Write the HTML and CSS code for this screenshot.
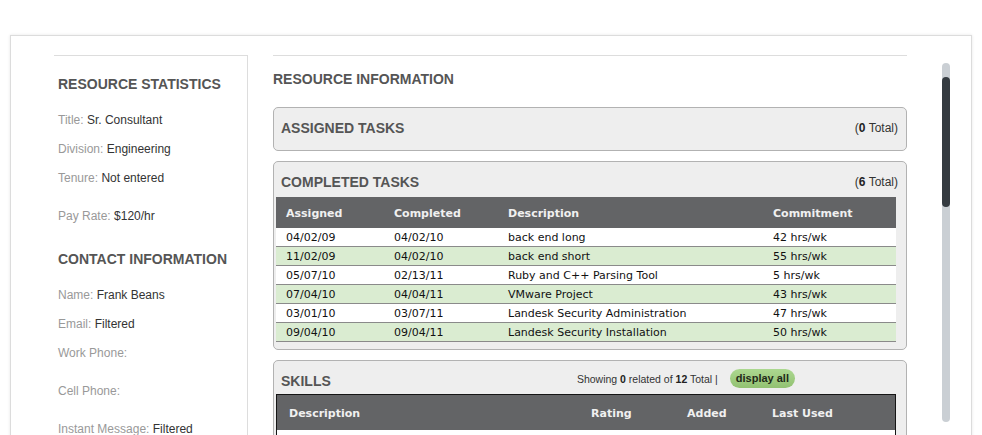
FILE: index.html
```html
<!DOCTYPE html>
<html>
<head>
<meta charset="utf-8">
<title>Resource</title>
<link rel="stylesheet" href="styles.css">
</head>
<body>
<div class="page">
  <div class="card">
    <aside class="side">
      <h3 class="sec-title first">RESOURCE STATISTICS</h3>
      <div class="row"><span class="lbl">Title:</span> <span class="val">Sr. Consultant</span></div>
      <div class="row"><span class="lbl">Division:</span> <span class="val">Engineering</span></div>
      <div class="row tall"><span class="lbl">Tenure:</span> <span class="val">Not entered</span></div>
      <div class="row"><span class="lbl">Pay Rate:</span> <span class="val">$120/hr</span></div>
      <h3 class="sec-title">CONTACT INFORMATION</h3>
      <div class="row"><span class="lbl">Name:</span> <span class="val">Frank Beans</span></div>
      <div class="row"><span class="lbl">Email:</span> <span class="val">Filtered</span></div>
      <div class="row tall"><span class="lbl">Work Phone:</span></div>
      <div class="row tall"><span class="lbl">Cell Phone:</span></div>
      <div class="row"><span class="lbl">Instant Message:</span> <span class="val">Filtered</span></div>
    </aside>

    <main class="main">
      <h2 class="main-title">RESOURCE INFORMATION</h2>

      <section class="panel assigned">
        <div class="panel-head">
          <h4 class="panel-title">ASSIGNED TASKS</h4>
          <span class="total">(<b>0</b> Total)</span>
        </div>
      </section>

      <section class="panel completed">
        <div class="panel-head">
          <h4 class="panel-title">COMPLETED TASKS</h4>
          <span class="total">(<b>6</b> Total)</span>
        </div>
        <table class="grid tasks">
          <colgroup>
            <col class="c1"><col class="c2"><col class="c3"><col class="c4">
          </colgroup>
          <thead>
            <tr><th>Assigned</th><th>Completed</th><th>Description</th><th>Commitment</th></tr>
          </thead>
          <tbody>
            <tr><td>04/02/09</td><td>04/02/10</td><td>back end long</td><td>42 hrs/wk</td></tr>
            <tr class="alt"><td>11/02/09</td><td>04/02/10</td><td>back end short</td><td>55 hrs/wk</td></tr>
            <tr><td>05/07/10</td><td>02/13/11</td><td>Ruby and C++ Parsing Tool</td><td>5 hrs/wk</td></tr>
            <tr class="alt"><td>07/04/10</td><td>04/04/11</td><td>VMware Project</td><td>43 hrs/wk</td></tr>
            <tr><td>03/01/10</td><td>03/07/11</td><td>Landesk Security Administration</td><td>47 hrs/wk</td></tr>
            <tr class="alt"><td>09/04/10</td><td>09/04/11</td><td>Landesk Security Installation</td><td>50 hrs/wk</td></tr>
          </tbody>
        </table>
      </section>

      <section class="panel skills">
        <div class="panel-head">
          <h4 class="panel-title">SKILLS</h4>
          <div class="showing">
            <span class="showing-text">Showing <b>0</b> related of <b>12</b> Total |</span>
            <span class="pill">display all</span>
          </div>
        </div>
        <table class="grid skill-table">
          <colgroup>
            <col class="s1"><col class="s2"><col class="s3"><col class="s4">
          </colgroup>
          <thead>
            <tr><th>Description</th><th>Rating</th><th>Added</th><th>Last Used</th></tr>
          </thead>
          <tbody>
            <tr class="empty"><td></td><td></td><td></td><td></td></tr>
          </tbody>
        </table>
      </section>
    </main>

    <div class="scrollbar"><div class="thumb"></div></div>
  </div>
</div>
</body>
</html>
```

FILE: styles.css
```css
html, body {
  margin: 0;
  padding: 0;
  overflow: hidden;
  background: #fff;
}

body {
  font-family: "Liberation Sans", Arial, sans-serif;
  color: #333;
}

.page {
  padding: 35px 0 0 10px;
}

.card {
  box-sizing: border-box;
  width: 962px;
  height: 640px;
  border: 1px solid #dcdcdc;
  box-shadow: 0 0 3px rgba(0, 0, 0, 0.10);
  display: flex;
  align-items: stretch;
  padding: 19px 0 0 43px;
  background: #fff;
}

/* left column */
.side {
  box-sizing: border-box;
  width: 194px;
  flex: none;
  border-top: 1px solid #dddddd;
  border-right: 1px solid #dddddd;
  padding-left: 4px;
}

.sec-title {
  margin: 28px 0 21px;
  font-size: 14px;
  line-height: 16px;
  font-weight: bold;
  color: #555;
}

.sec-title.first {
  margin-top: 20px;
}

.row {
  font-size: 12px;
  line-height: 14px;
  margin-bottom: 15px;
}

.row.tall {
  margin-bottom: 24px;
}

.lbl {
  color: #999;
}

.val {
  color: #333;
}

/* right column */
.main {
  width: 634px;
  flex: none;
  margin-left: 25px;
  border-top: 1px solid #dddddd;
}

.main-title {
  margin: 15px 0 20px;
  font-size: 14px;
  line-height: 16px;
  font-weight: bold;
  color: #555;
}

.panel {
  border: 1px solid #b2b2b2;
  border-radius: 5px;
  background: #eeeeee;
  margin-bottom: 10px;
}

.panel-head {
  display: flex;
  align-items: flex-start;
  padding: 12px 8px 7px 7px;
}

.assigned {
  padding-bottom: 2px;
}

.assigned .panel-head {
  height: 40px;
  box-sizing: border-box;
  align-items: center;
  padding: 0 8px 0 7px;
}

.completed {
  padding-bottom: 7px;
}

.skills .panel-head {
  padding-bottom: 5px;
}

.panel-title {
  margin: 0;
  font-size: 14px;
  line-height: 16px;
  font-weight: bold;
  color: #555;
}

.total {
  margin-left: auto;
  font-size: 12px;
  line-height: 16px;
  color: #333;
}

.total b {
  color: #222;
}

/* tables */
.grid {
  margin-left: 2px;
  width: 620px;
  table-layout: fixed;
  border-collapse: separate;
  border-spacing: 0;
  font-family: "DejaVu Sans", Verdana, sans-serif;
  font-size: 11px;
}

.grid th {
  background: #636466;
  color: #f0f0f0;
  font-weight: bold;
  text-align: left;
  line-height: 29px;
  padding: 2px 0 0 10px;
  white-space: nowrap;
}

.grid td {
  background: #fff;
  color: #111;
  line-height: 17px;
  padding: 1px 0 0 10px;
  border-bottom: 1px solid #8a8a8a;
  white-space: nowrap;
  overflow: hidden;
}

.grid tr.alt td {
  background: #daecd1;
}

.tasks .c1 { width: 108px; }
.tasks .c2 { width: 114px; }
.tasks .c3 { width: 265px; }
.tasks .c4 { width: 133px; }

.skill-table {
  border: 1px solid #151515;
}

.skill-table th {
  line-height: 33px;
  padding-left: 12px;
}

.skill-table td {
  padding-left: 12px;
}

.skill-table tr.empty td {
  height: 17px;
  border-bottom: 0;
}

.skill-table .s1 { width: 302px; }
.skill-table .s2 { width: 96px; }
.skill-table .s3 { width: 85px; }
.skill-table .s4 { width: 135px; }

/* skills header extras */
.showing {
  margin-left: auto;
  margin-right: 103px;
  margin-top: -4px;
  display: flex;
  align-items: center;
  gap: 12px;
  height: 19px;
}

.showing-text {
  font-size: 10.5px;
  color: #333;
}

.showing-text b {
  color: #222;
}

.pill {
  display: inline-block;
  height: 19px;
  line-height: 19px;
  padding: 0 6px;
  border-radius: 10px;
  background: linear-gradient(#acd890, #92c172);
  font-size: 11px;
  font-weight: bold;
  color: #1f2a18;
}

/* scrollbar */
.scrollbar {
  flex: none;
  align-self: flex-start;
  width: 8px;
  height: 359px;
  margin: 8px 0 0 35px;
  border-radius: 4px;
  background: #cacfd4;
  overflow: hidden;
}

.thumb {
  margin-top: 14px;
  height: 130px;
  border-radius: 4px;
  background: #353b41;
}
```
